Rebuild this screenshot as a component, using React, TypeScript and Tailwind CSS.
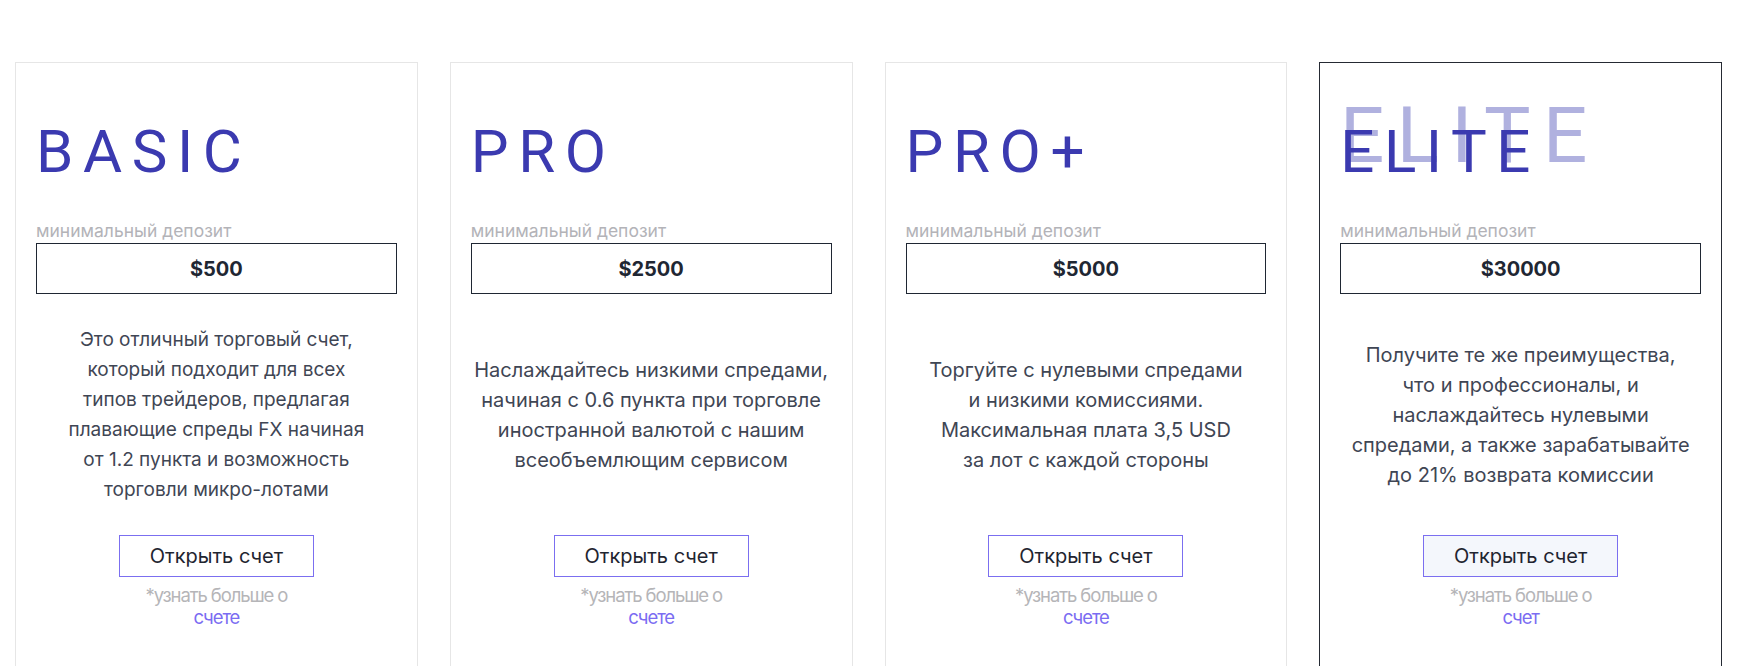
const plans = [
  {
    name: "BASIC",
    deposit: "$500",
    lines: [
      "Это отличный торговый счет,",
      "который подходит для всех",
      "типов трейдеров, предлагая",
      "плавающие спреды FX начиная",
      "от 1.2 пункта и возможность",
      "торговли микро-лотами",
    ],
    link: "счете",
    active: false,
    small: true,
  },
  {
    name: "PRO",
    deposit: "$2500",
    lines: [
      "Наслаждайтесь низкими спредами,",
      "начиная с 0.6 пункта при торговле",
      "иностранной валютой с нашим",
      "всеобъемлющим сервисом",
    ],
    link: "счете",
    active: false,
    small: false,
  },
  {
    name: "PRO+",
    deposit: "$5000",
    lines: [
      "Торгуйте с нулевыми спредами",
      "и низкими комиссиями.",
      "Максимальная плата 3,5 USD",
      "за лот с каждой стороны",
    ],
    link: "счете",
    active: false,
    small: false,
  },
  {
    name: "ELITE",
    deposit: "$30000",
    lines: [
      "Получите те же преимущества,",
      "что и профессионалы, и",
      "наслаждайтесь нулевыми",
      "спредами, а также зарабатывайте",
      "до 21% возврата комиссии",
    ],
    link: "счет",
    active: true,
    small: false,
  },
];

function PlanCard({ plan }: { plan: (typeof plans)[number] }) {
  return (
    <div
      className={
        plan.active
          ? "flex flex-col h-[620px] px-5 pt-[59px] border border-[#252a33]"
          : "flex flex-col h-[620px] px-5 pt-[59px] border border-[#e6e6e6]"
      }
    >
      <div className="relative h-[60px] font-['Roboto',sans-serif] text-[60px] leading-[60px] tracking-[0.16em] text-[#3b3ab0]">
        {plan.active && (
          <span className="absolute left-0 top-[-25px] origin-top-left scale-[1.3] text-[#b0b1df]">
            {plan.name}
          </span>
        )}
        <span className="relative">{plan.name}</span>
      </div>

      <div className="mt-[37px] text-[17.5px] leading-6 text-[#b3b3b8]">минимальный депозит</div>
      <div className="h-[51px] flex items-center justify-center border border-[#1f2733] text-[20px] font-bold text-[#1f2733]">
        {plan.deposit}
      </div>

      <div
        className={
          plan.small
            ? "h-[241px] flex flex-col items-center justify-center text-center text-[19px] leading-[30px] text-[#3f4654]"
            : "h-[241px] flex flex-col items-center justify-center text-center text-[20px] leading-[30px] text-[#3f4654]"
        }
      >
        {plan.lines.map((l) => (
          <span key={l} className="whitespace-nowrap">
            {l}
          </span>
        ))}
      </div>

      <button
        className={
          plan.active
            ? "self-center w-[195px] h-[42px] border border-[#7b6ff0] bg-[#f4f7fc] text-[20px] text-[#1f2530]"
            : "self-center w-[195px] h-[42px] border border-[#7b6ff0] bg-white text-[20px] text-[#1f2530]"
        }
      >
        Открыть счет
      </button>
      <div className="mt-[7px] flex flex-col items-center text-[18.5px] leading-[22px] tracking-[-0.06em] text-[#b5b5b8]">
        <span>*узнать больше о</span>
        <span className="text-[#7b6cf2]">{plan.link}</span>
      </div>
    </div>
  );
}

export default function App() {
  return (
    <div className="w-full h-[666px] overflow-hidden bg-white font-['Inter',sans-serif]">
      <div className="grid grid-cols-4 gap-8 pl-[15px] pr-[15px] pt-[62px]">
        {plans.map((p) => (
          <PlanCard key={p.name} plan={p} />
        ))}
      </div>
    </div>
  );
}
